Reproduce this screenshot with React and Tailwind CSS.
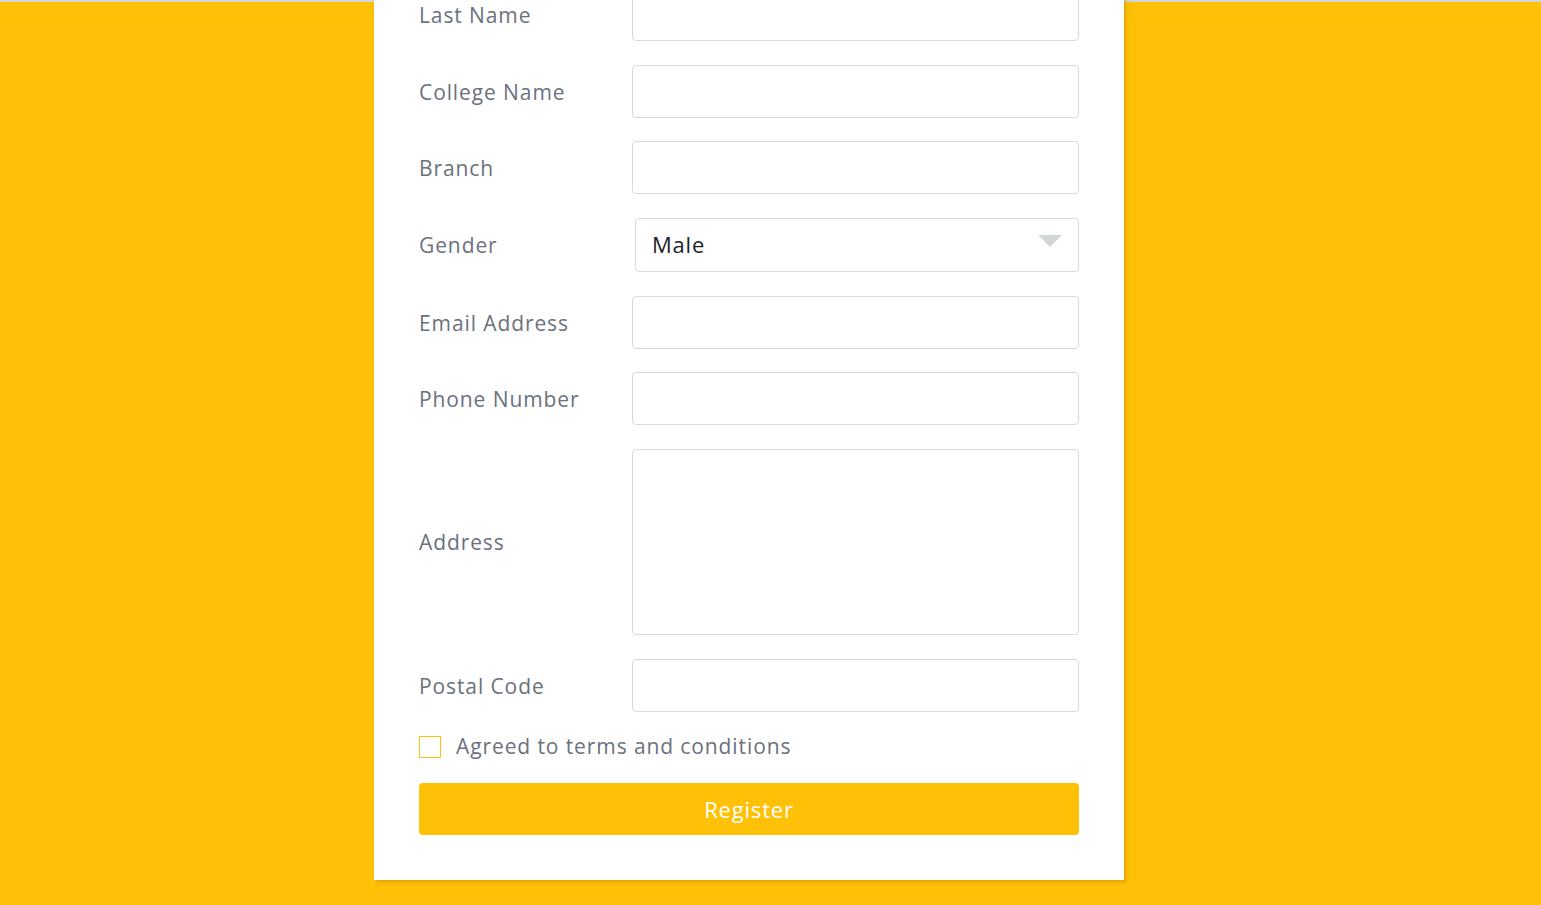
function Field({ label, tall, gap = "mb-[24px]", children }) {
    // One row: label on the left, control on the right
    return (
        <div className={`flex flex-row items-center ${tall ? "h-[186px]" : "h-[53px]"} ${gap}`}>
            <label className="w-[213px] shrink-0 pt-[2px] text-[21px] tracking-[0.9px] text-[#6b717d]">
                {label}
            </label>
            {children || (
                <div className="flex-1 h-full bg-white border border-[#d6dadd] rounded-[4px]" />
            )}
        </div>
    );
}

export default function App() {
    return (
        <div
            className="w-full h-[905px] overflow-hidden bg-[#ffc107] flex flex-col"
            style={{ fontFamily: '"Open Sans", "Liberation Sans", sans-serif' }}
        >
            <div className="h-[2px] w-full bg-[#d4d6d8] shrink-0" />
            <div className="flex pl-[374px]">
                <div className="w-[750px] -mt-[14px] bg-white px-[45px] pb-[45px] shadow-[2px_2px_4px_rgba(180,130,0,0.45)]">
                    <Field label="Last Name" />
                    <Field label="College Name" gap="mb-[23px]" />
                    <Field label="Branch" />
                    <Field label="Gender" gap="mb-[25px]">
                        <div className="flex-1 h-[54px] ml-[3px] bg-white border border-[#d6dadd] rounded-[4px] flex items-center justify-between pl-[16px] pr-[16px]">
                            <span className="text-[22px] tracking-[0.8px] text-[#1e2229]">Male</span>
                            <svg width="24" height="12" viewBox="0 0 24 12" className="-mt-[8px]">
                                <polygon points="0,0 24,0 12,12" fill="#d3d6d6" />
                            </svg>
                        </div>
                    </Field>
                    <Field label="Email Address" gap="mb-[23px]" />
                    <Field label="Phone Number" />
                    <Field label="Address" tall />
                    <Field label="Postal Code" />
                    <div className="flex flex-row items-center h-[22px] mb-[25px]">
                        <div className="w-[22px] h-[22px] border border-[#ffc107] bg-white" />
                        <span className="ml-[15px] text-[21px] tracking-[0.9px] text-[#6b717d]">
                            Agreed to terms and conditions
                        </span>
                    </div>
                    <button className="w-full h-[52px] bg-[#ffc107] rounded-[4px] text-white text-[22px] tracking-[0.8px]">
                        Register
                    </button>
                </div>
            </div>
        </div>
    );
}
